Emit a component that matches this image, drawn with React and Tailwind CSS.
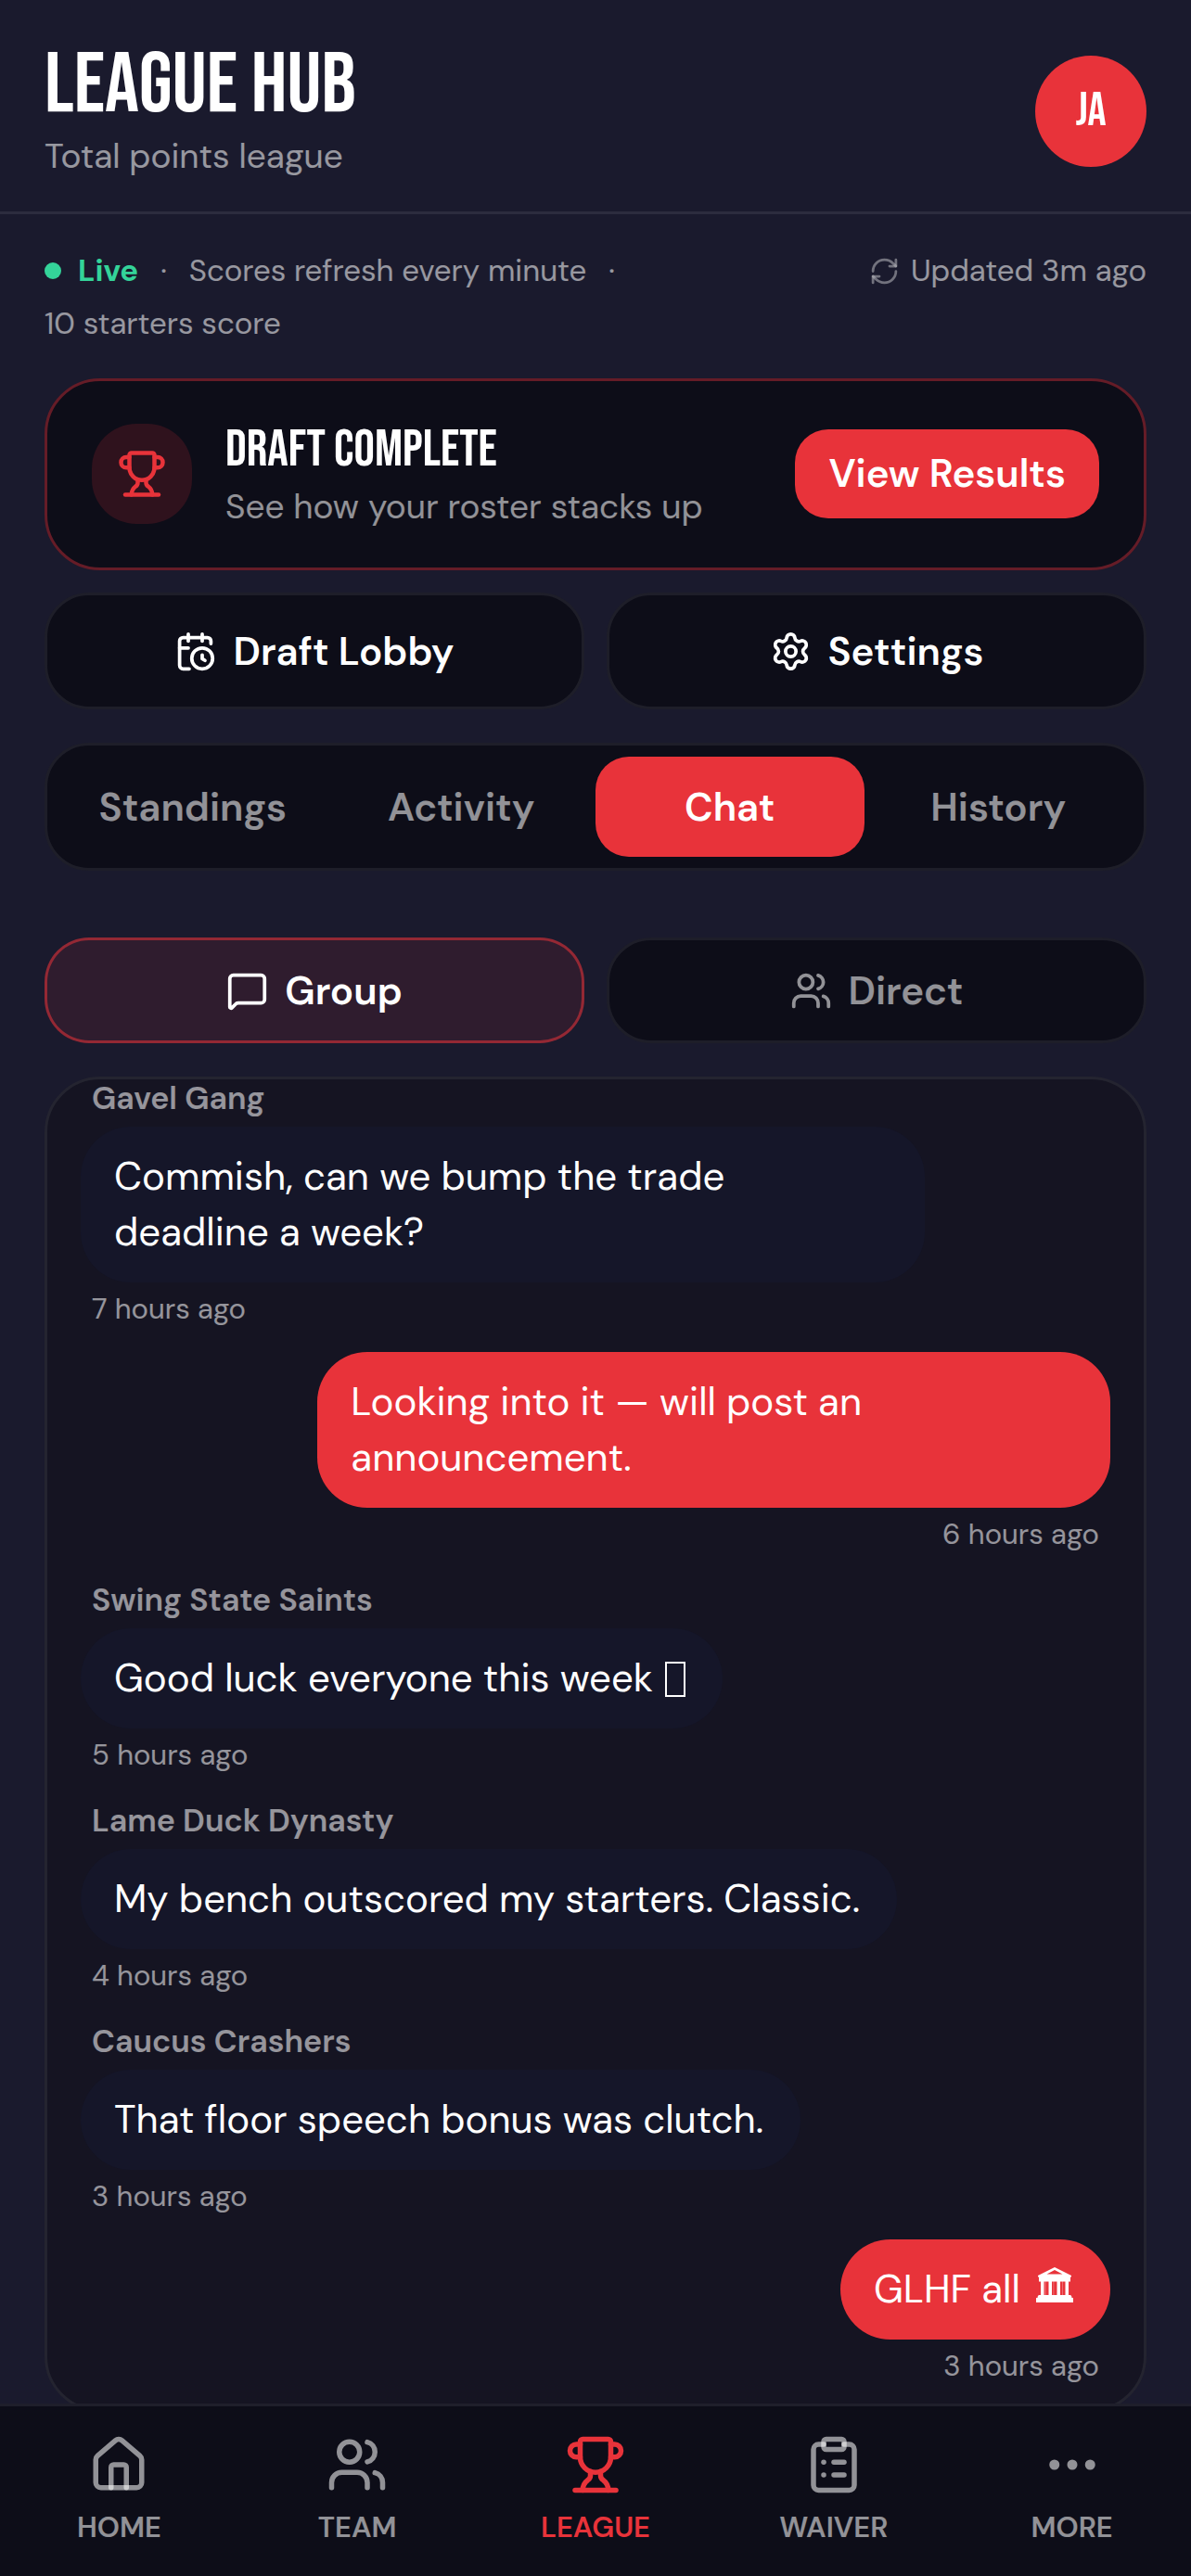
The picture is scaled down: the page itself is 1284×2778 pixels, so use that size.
import React, { useState } from 'react';
import {
  CalendarClock,
  ClipboardList,
  Ellipsis,
  House,
  MessageSquare,
  RefreshCw,
  Settings,
  Trophy,
  Users,
} from 'lucide-react';

// box shown for an emoji the font has no glyph for
const MissingGlyph = () => (
  <span className="inline-block w-[22px] h-[38px] ml-0.5 border-2 border-current align-[-6px]" aria-hidden="true" />
);

const Landmark = () => (
  <svg viewBox="0 0 40 38" className="inline-block w-10 h-[38px] ml-1.5 mr-1 align-baseline" fill="currentColor" aria-hidden="true">
    <path fillRule="evenodd" d="M20 0 38 9v1.500h-1V15.500H3V10.500H2V9ZM20 3 11.500 7.500h17Z" />
    <path d="M5 15h3.500v15H5zM13.500 15H17v15h-3.500zM22.500 15H26v15h-3.500zM31.500 15H35v15h-3.500z" />
    <path d="M9.500 15h1v15h-1zM18.500 15h.8v15h-.8zM28 15h.8v15H28z" opacity=".35" />
    <path d="M3 30h34q1.500.5 1.500 3H40v5H0v-5h1.500Q1.500 30.500 3 30Z" />
  </svg>
);

const messages = [
  { id: 1, team: 'Gavel Gang', text: 'Commish, can we bump the trade deadline a week?', time: '7 hours ago' },
  { id: 2, mine: true, text: 'Looking into it — will post an announcement.', time: '6 hours ago' },
  { id: 3, team: 'Swing State Saints', text: 'Good luck everyone this week', emoji: MissingGlyph, time: '5 hours ago' },
  { id: 4, team: 'Lame Duck Dynasty', text: 'My bench outscored my starters. Classic.', time: '4 hours ago' },
  { id: 5, team: 'Caucus Crashers', text: 'That floor speech bonus was clutch.', time: '3 hours ago' },
  { id: 6, mine: true, text: 'GLHF all', emoji: Landmark, time: '3 hours ago' },
];

const tabs = ['Standings', 'Activity', 'Chat', 'History'];

const navItems = [
  { label: 'HOME', icon: House },
  { label: 'TEAM', icon: Users },
  { label: 'LEAGUE', icon: Trophy },
  { label: 'WAIVER', icon: ClipboardList },
  { label: 'MORE', icon: Ellipsis },
];

const Message = ({ msg }) => {
  const Emoji = msg.emoji;
  return (
    <li className={msg.mine ? 'flex flex-col items-end' : 'flex flex-col items-start'}>
      {msg.team && (
        <span className="px-3 mb-1.5 text-[34px] leading-[49px] font-semibold text-white/55">{msg.team}</span>
      )}
      <p
        className={
          msg.mine
            ? 'max-w-[77%] rounded-[54px] bg-[#e8333a] px-9 py-6 text-[42px] leading-[60px] text-white'
            : 'max-w-[82%] rounded-[54px] bg-[#151629] pl-9 pr-10 py-6 text-[42px] leading-[60px] text-white'
        }
      >
        {msg.text}
        {Emoji && <> <Emoji /></>}
      </p>
      <span className="px-3 mt-1.5 text-[31px] leading-[45px] text-white/55">{msg.time}</span>
    </li>
  );
};

export default function App() {
  const [tab, setTab] = useState('Chat');
  const [room, setRoom] = useState('group');

  const roomOn = 'flex flex-1 items-center justify-center gap-[18px] h-[114px] rounded-[48px] border-3 border-[#e8333a]/55 bg-[#2f1c2e] text-white';
  const roomOff = 'flex flex-1 items-center justify-center gap-[18px] h-[114px] rounded-[48px] border-3 border-[#1e1e29] bg-[#0d0d18] text-white/55';

  return (
    <div className="min-h-screen bg-[#1a1a2d] font-['DM_Sans','Open_Sans',sans-serif] text-white">
      <header className="flex items-center justify-between px-12 pt-[45px] pb-[33px] border-b-3 border-[#2c2c3e]">
        <div>
          <h1 className="font-['Bebas_Neue','Roboto_Condensed',sans-serif] text-[92px] leading-[96px]">LEAGUE HUB</h1>
          <p className="text-[37px] leading-[54px] text-white/55">Total points league</p>
        </div>
        <button
          type="button"
          className="size-[120px] rounded-full bg-[#e8333a] font-['Bebas_Neue','Roboto_Condensed',sans-serif] text-[50px]"
        >
          JA
        </button>
      </header>

      <main className="px-12 pt-9 pb-44">
        <div className="flex items-start justify-between text-[33px] leading-[50px] text-white/55">
          <div className="flex flex-wrap items-center gap-x-[18px] gap-y-[7px] w-3/5">
            <span className="size-[18px] rounded-full bg-[#34d399]" />
            <span className="font-bold text-[#34d399]">Live</span>
            <span className="px-1.5">·</span>
            <span>Scores refresh every minute</span>
            <span className="px-1.5">·</span>
            <span>10 starters score</span>
          </div>
          <div className="flex items-center gap-3">
            <RefreshCw size={33} className="opacity-70" />
            <span>Updated 3m ago</span>
          </div>
        </div>

        <section className="mt-[34px] flex items-center gap-9 rounded-[60px] border-3 border-[#651c27] bg-[#0d0d18] px-12 pt-[39px] pb-[41px]">
          <div className="flex items-center justify-center size-[108px] rounded-[48px] bg-[#2f121d] text-[#e8333a]">
            <Trophy size={54} />
          </div>
          <div className="flex-1">
            <h2 className="font-['Bebas_Neue','Roboto_Condensed',sans-serif] text-[56px] leading-[72px]">DRAFT COMPLETE</h2>
            <p className="text-[37px] leading-[49px] text-white/55">See how your roster stacks up</p>
          </div>
          <button type="button" className="h-24 px-9 rounded-[36px] bg-[#e8333a] text-[42px] font-semibold">
            View Results
          </button>
        </section>

        <div className="mt-6 flex gap-6 text-[42px] font-semibold">
          <button type="button" className="flex flex-1 items-center justify-center gap-[18px] h-[126px] rounded-[48px] border-3 border-[#1e1e29] bg-[#0d0d18]">
            <CalendarClock size={45} />
            Draft Lobby
          </button>
          <button type="button" className="flex flex-1 items-center justify-center gap-[18px] h-[126px] rounded-[48px] border-3 border-[#1e1e29] bg-[#0d0d18]">
            <Settings size={45} />
            Settings
          </button>
        </div>

        <div role="tablist" className="mt-9 flex rounded-[48px] border-3 border-[#1e1e29] bg-[#0d0d18] p-3 text-[42px] font-semibold">
          {tabs.map((name) => (
            <button
              key={name}
              type="button"
              role="tab"
              aria-selected={tab === name}
              onClick={() => setTab(name)}
              className={
                tab === name
                  ? 'flex-1 h-[108px] rounded-[36px] bg-[#e8333a] text-white'
                  : 'flex-1 h-[108px] rounded-[36px] text-white/55'
              }
            >
              {name}
            </button>
          ))}
        </div>

        <div className="mt-[72px] flex gap-6 text-[42px] font-semibold">
          <button type="button" onClick={() => setRoom('group')} className={room === 'group' ? roomOn : roomOff}>
            <MessageSquare size={45} />
            Group
          </button>
          <button type="button" onClick={() => setRoom('direct')} className={room === 'direct' ? roomOn : roomOff}>
            <Users size={45} />
            Direct
          </button>
        </div>

        {/* newest message stays pinned to the bottom of the panel */}
        <section className="mt-9 flex h-[1440px] flex-col justify-end overflow-hidden rounded-[60px] border-3 border-[#242430] bg-[#151422] px-9 pb-6">
          <ul className="flex flex-col gap-6">
            {messages.map((msg) => (
              <Message key={msg.id} msg={msg} />
            ))}
          </ul>
        </section>
      </main>

      <nav className="fixed inset-x-0 bottom-0 flex border-t-3 border-[#1f1f2b] bg-[#0d0d18] pt-[30px] pb-[30px]">
        {navItems.map(({ label, icon: Icon }) => (
          <a
            key={label}
            href={`#${label.toLowerCase()}`}
            className={
              label === 'LEAGUE'
                ? 'flex flex-1 flex-col items-center gap-3 text-[#e8333a]'
                : 'flex flex-1 flex-col items-center gap-3 text-white/55'
            }
          >
            <Icon size={66} />
            <span className="text-[31px] leading-[45px] font-semibold">{label}</span>
          </a>
        ))}
      </nav>
    </div>
  );
}
